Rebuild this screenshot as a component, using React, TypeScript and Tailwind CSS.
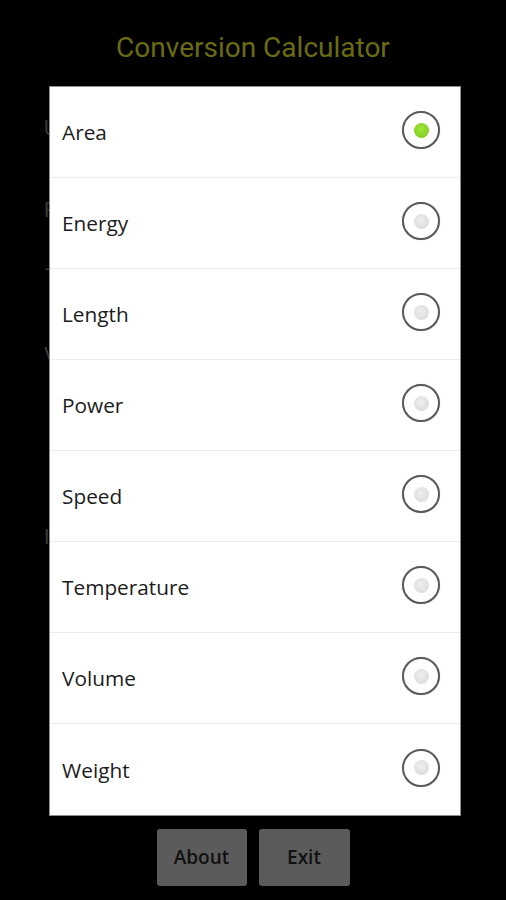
import React from "react";

const items = ["Area", "Energy", "Length", "Power", "Speed", "Temperature", "Volume", "Weight"];

function Radio({ checked }: { checked: boolean }) {
  return (
    <div className="w-[38px] h-[38px] rounded-full border-2 border-[#5a5a5a] flex items-center justify-center bg-white shadow-[0_0_1px_rgba(0,0,0,0.3)]">
      {checked ? (
        <div className="w-[15px] h-[15px] rounded-full bg-[radial-gradient(circle_at_45%_40%,#9be635,#7cc521)]" />
      ) : (
        <div className="w-[15px] h-[15px] rounded-full bg-[radial-gradient(circle_at_45%_40%,#eeeeee,#d6d6d6)]" />
      )}
    </div>
  );
}

export default function App() {
  return (
    <div
      className="relative w-[506px] h-[900px] bg-black overflow-hidden flex flex-col"
      style={{ fontFamily: "Roboto, 'Noto Sans', sans-serif" }}
    >
      <div className="h-[96px] pt-[31px] flex justify-center">
        <span className="text-[28px] leading-[34px] text-[#6b6b12]">Conversion Calculator</span>
      </div>
      <div className="flex flex-col pl-[44px] text-[20px] text-[#3a3a3a]">
        <div className="mt-[18px] h-[28px] leading-[28px]">U</div>
        <div className="mt-[54px] h-[28px] leading-[28px]">F</div>
        <div className="mt-[32px] h-[28px] leading-[28px]">—</div>
        <div className="mt-[57px] h-[28px] leading-[28px]">V</div>
        <div className="mt-[154px] h-[28px] leading-[28px]">I</div>
      </div>
      <div
        className="mt-auto mb-[14px] flex justify-center gap-[12px]"
        style={{ fontFamily: "'Open Sans', sans-serif" }}
      >
        <div className="w-[90px] h-[57px] rounded-[3px] bg-[#5b5b5b] flex items-center justify-center text-[19px] font-semibold text-[#111]">
          About
        </div>
        <div className="w-[91px] h-[57px] rounded-[3px] bg-[#5b5b5b] flex items-center justify-center text-[19px] font-semibold text-[#111]">
          Exit
        </div>
      </div>

      <div
        className="absolute left-[49px] top-[86px] w-[412px] h-[730px] bg-white border border-[#8c8c8c] flex flex-col"
        style={{ fontFamily: "'Open Sans', sans-serif" }}
      >
        {items.map((it, i) => (
          <div
            key={it}
            className={
              "h-[91px] shrink-0 flex items-center justify-between pl-[12px] pr-[20px] " +
              (i < items.length - 1 ? "border-b border-[#ececec]" : "")
            }
          >
            <span className="text-[20.8px] text-[#1c1c1c] mt-[2px]">{it}</span>
            <div className="mb-[4px]">
              <Radio checked={i === 0} />
            </div>
          </div>
        ))}
      </div>
    </div>
  );
}
